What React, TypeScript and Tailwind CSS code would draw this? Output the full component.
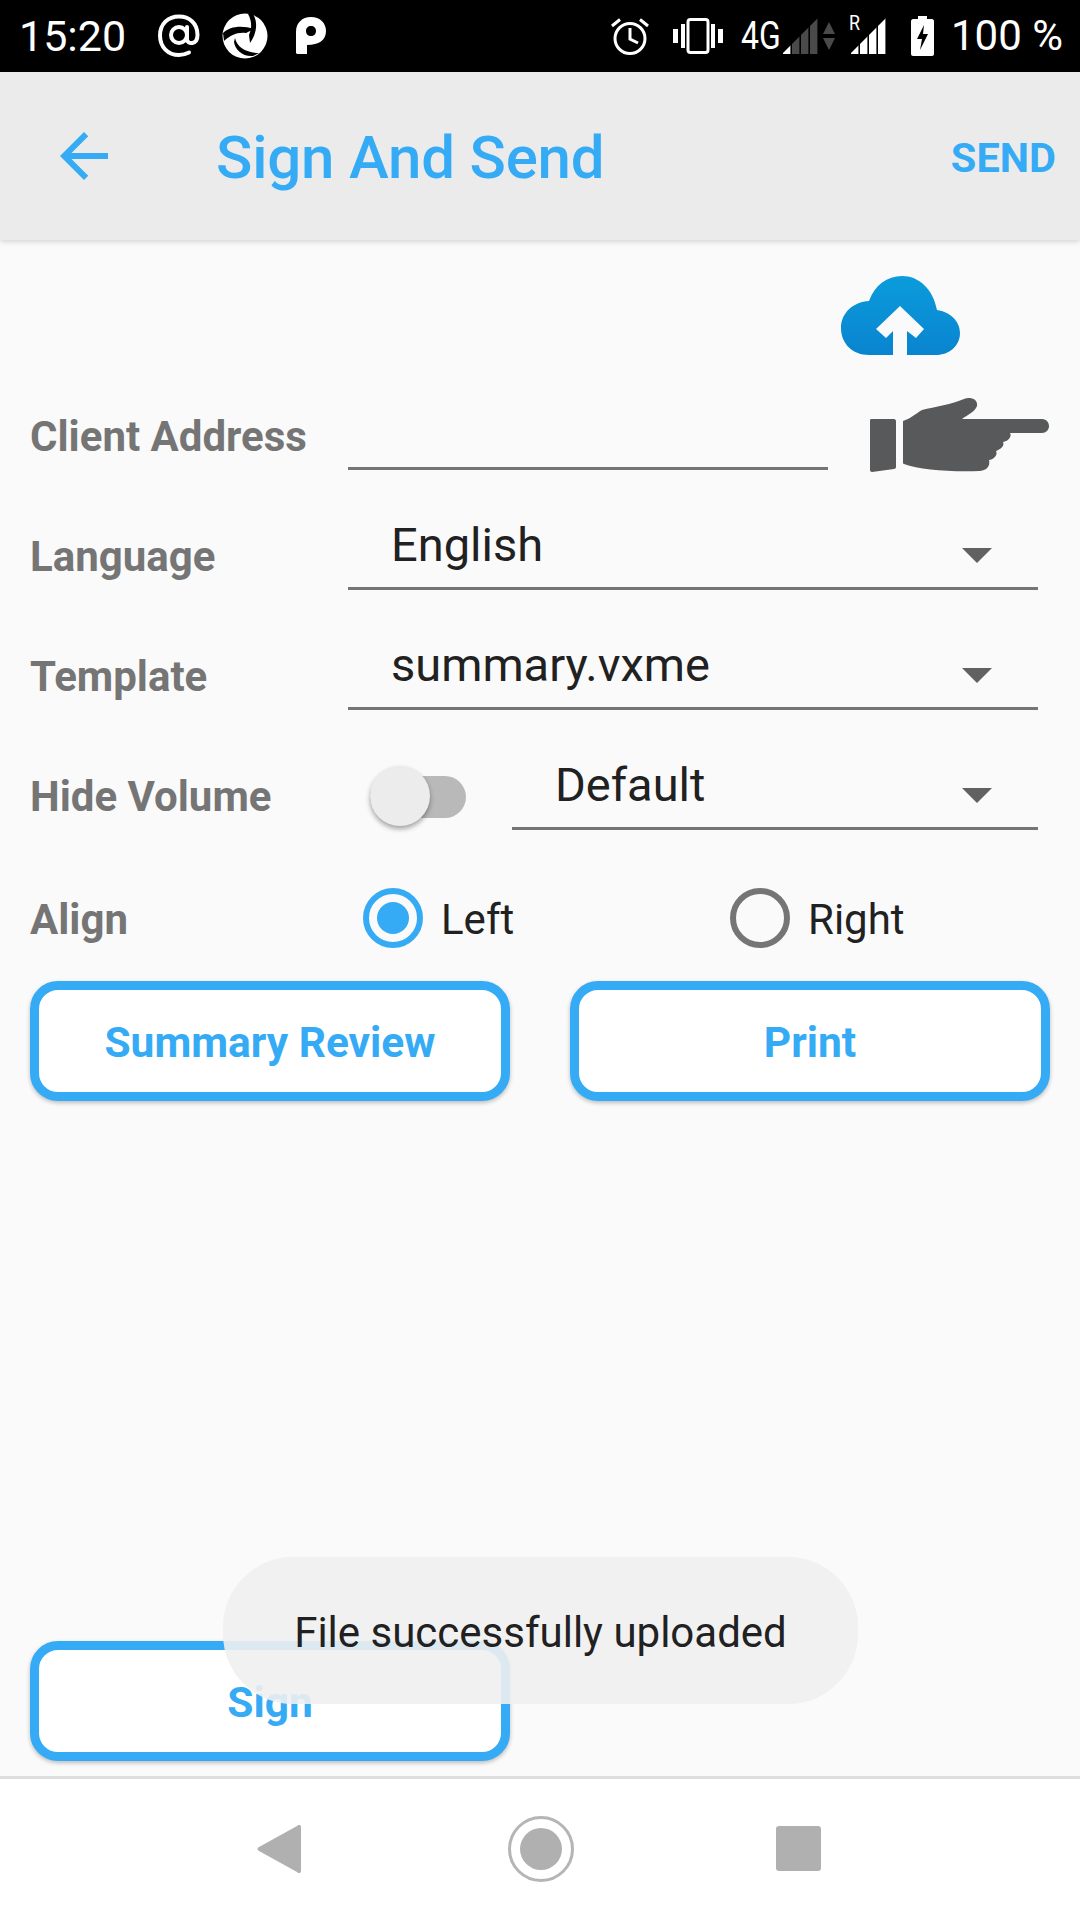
import React from "react";

const Triangle = () => (
  <svg width="30" height="15" viewBox="0 0 30 15" className="mt-[5px]"><path d="M0 0H30L15 15Z" fill="#616161" /></svg>
);

const Select = ({ value, className, pad }: { value: string; className: string; pad: string }) => (
  <div className={`h-[72px] flex items-center justify-between border-b-[3px] border-[#757575] ${className} ${pad}`}>
    <span className="text-[47px] leading-none text-[#212121] mb-[16px]">{value}</span>
    <Triangle />
  </div>
);

const Label = ({ children }: { children: React.ReactNode }) => (
  <div className="ml-[30px] w-[318px] h-[54px] shrink-0 text-[42px] font-bold leading-none text-[#757575]">{children}</div>
);

const OutlineButton = ({ children }: { children: React.ReactNode }) => (
  <button className="w-[480px] h-[120px] pt-[4px] rounded-[28px] border-[9px] border-[#36abf5] bg-white text-[42.500px] font-bold leading-none text-[#36abf5] shadow-[0_2px_4px_rgba(0,0,0,0.25)]">
    {children}
  </button>
);

const Signal = ({ id, color, fill }: { id: string; color: string; fill: number }) => {
  const bars = [0, 1, 2, 3];
  return (
    <svg width="36" height="36" viewBox="0 0 36 36">
      <defs>
        <clipPath id={id}><path d="M0 36L36 0V36Z" /></clipPath>
      </defs>
      <g clipPath={`url(#${id})`}>
        {bars.map((b) => (
          <rect key={b} x={b * 9 + 1} y="0" width="7.4" height="36" fill={b < fill ? color : "#4a4a4a"} />
        ))}
      </g>
    </svg>
  );
};

const StatusBar = () => (
  <div className="h-[72px] bg-black flex items-center text-white shrink-0">
    <span className="ml-[19px] w-[104px] text-[43px] leading-none whitespace-nowrap">15:20</span>
    <svg className="ml-[35px]" width="42" height="44" viewBox="0 0 42 44" fill="none" stroke="white" strokeWidth="4">
      <circle cx="21" cy="21" r="8" />
      <path d="M29 13V25C29 31 39.5 31 39.5 21C39.5 9 31 2.5 21 2.5C10 2.5 2 10 2 21.500C2 33 10 41 21 41C25 41 28 40 31 38.500" strokeLinecap="round" />
    </svg>
    <svg className="ml-[22px]" width="46" height="46" viewBox="0 0 46 46">
      <circle cx="23" cy="23" r="22.500" fill="white" />
      <path d="M1 20C8 13 20 12 32 16L24 20C15 19 9 22 2 28Z" fill="black" />
      <path d="M31 1C36 9 35 20 28 30L27 22C30 15 30 8 26 1Z" fill="black" />
      <path d="M13 25C15 34 24 40 37 40L31 43C21 44 13 37 12 29Z" fill="black" />
    </svg>
    <svg className="ml-[28px]" width="30" height="38" viewBox="0 0 30 38">
      <path fillRule="evenodd" d="M0 15C0 6 6 0 15 0C24 0 30 6 30 14C30 23 23 28 11 28V37H2C0.500 37 0 36.500 0 35ZM15 9C12 9 10 11 10 14C10 17 12 19 15 19C18 19 20 17 20 14C20 11 18 9 15 9Z" fill="white" />
    </svg>
    <div className="flex-1" />
    <svg width="38" height="38" viewBox="0 0 38 38" fill="none" stroke="white" strokeWidth="3">
      <circle cx="19" cy="21.500" r="15" />
      <path d="M19 11V22L27 26M1 9L9 2.500M37 9L29 2.500" />
    </svg>
    <svg className="ml-[24px]" width="50" height="36" viewBox="0 0 50 36">
      <rect x="15" y="1.500" width="20" height="33" rx="2.500" fill="none" stroke="white" strokeWidth="3" />
      <path d="M0 11H5V25H0ZM8 6H12V30H8ZM38 6H42V30H38ZM45 11H50V25H45Z" fill="white" />
    </svg>
    <span className="ml-[18px] w-[40px] text-[38px] leading-none scale-x-[0.84] origin-left whitespace-nowrap">4G</span>
    <div className="ml-[1px]"><Signal id="sig-dim" color="#ffffff" fill={1} /></div>
    <svg className="ml-[5px] mb-[1px]" width="12" height="28" viewBox="0 0 12 28"><path d="M6 0L12 12H0ZM6 28L12 16H0Z" fill="#4a4a4a" /></svg>
    <div className="ml-[15px] relative">
      <Signal id="sig-full" color="#ffffff" fill={4} />
      <span className="absolute left-[-2px] top-[-5px] text-[21px] leading-none scale-x-[0.85]">R</span>
    </div>
    <svg className="ml-[25px]" width="23" height="40" viewBox="0 0 23 40">
      <path fillRule="evenodd" d="M7 0H16V3H21C22 3 23 4 23 5V38C23 39 22 40 21 40H2C1 40 0 39 0 38V5C0 4 1 3 2 3H7ZM13 9L6 23H11L9 34L17 18H12Z" fill="white" />
    </svg>
    <span className="ml-[17px] mr-[17px] text-[42px] leading-none whitespace-nowrap">100 %</span>
  </div>
);

const AppBar = () => (
  <div className="h-[168px] bg-[#ebebeb] flex items-center shrink-0 shadow-[0_2px_5px_rgba(0,0,0,0.14)] z-10">
    <svg className="ml-[48px]" width="72" height="72" viewBox="0 0 24 24" fill="#36abf5">
      <path d="M20 11H7.830l5.590-5.590L12 4l-8 8 8 8 1.410-1.410L7.830 13H20v-2z" />
    </svg>
    <span className="ml-[96px] text-[60px] tracking-[-0.2px] font-medium leading-none text-[#36abf5] mt-[4px]">Sign And Send</span>
    <div className="flex-1" />
    <span className="mr-[24px] text-[41.500px] font-bold leading-none text-[#36abf5] mt-[3px]">SEND</span>
  </div>
);

const Row = ({ children }: { children: React.ReactNode }) => (
  <div className="h-[120px] flex items-end">{children}</div>
);

export default function App() {
  return (
    <div className="relative h-[1920px] w-[1080px] flex flex-col bg-[#fafafa] overflow-hidden font-['Roboto',sans-serif]">
      <StatusBar />
      <AppBar />
      <main className="flex-1 flex flex-col">
        <div className="h-[110px] flex justify-end pr-[120px] pt-[36px]">
          <svg width="119" height="80" viewBox="0 0 119 80">
            <defs>
              <linearGradient id="cloud" x1="0" y1="0" x2="0" y2="1">
                <stop offset="0" stopColor="#0a9cdb" />
                <stop offset="1" stopColor="#0a84d0" />
              </linearGradient>
            </defs>
            <path d="M28 79C12 79 0 68 0 52C0 37 12 26 28 25C34 9 46 0 61 0C78 0 92 13 96 34C109 36 119 45 119 57C119 70 108 79 95 79H28Z" fill="url(#cloud)" />
            <path d="M59 30L35 53L45 62L52 55V79H66V55L75 62L83 53Z" fill="#fafafa" />
          </svg>
        </div>
        <Row>
          <Label>Client Address</Label>
          <div className="w-[480px] border-b-[3px] border-[#757575] h-[72px]" />
          <svg className="ml-[42px] mb-[-2px]" width="180" height="74" viewBox="0 0 180 74" fill="#58595b">
            <path d="M0 22C0 21 1 21 2 21H24C25 21 26 22 26 23V69C26 70 25 71 24 71L2 74C1 74 0 73 0 72Z" />
            <path d="M33 23C40 21 45 16 52 12C65 9 82 6 94 1C102 -2 108 2 107 8C105 14 97 17 92 21H172C177 21 179 25 179 28C179 32 176 35 172 35H140C142 38 139 43 133 44C135 48 130 52 126 53C128 57 124 61 119 62C120 66 119 72 110 73C80 74 50 72 34 66C33 66 33 65 33 64Z" />
          </svg>
        </Row>
        <Row>
          <Label>Language</Label>
          <Select value="English" className="w-[690px]" pad="pl-[43px] pr-[46px]" />
        </Row>
        <Row>
          <Label>Template</Label>
          <Select value="summary.vxme" className="w-[690px]" pad="pl-[43px] pr-[46px]" />
        </Row>
        <Row>
          <Label>Hide Volume</Label>
          <div className="w-[164px] h-[72px] relative">
            <div className="absolute left-[22px] top-[18px] w-[96px] h-[42px] rounded-full bg-[#b9b9b9]" />
            <div className="absolute left-[22px] top-[8px] w-[60px] h-[60px] rounded-full bg-[#ececec] shadow-[0_3px_5px_rgba(0,0,0,0.35)]" />
          </div>
          <Select value="Default" className="w-[526px]" pad="pl-[43px] pr-[46px]" />
        </Row>
        <div className="h-[151px] flex items-start pt-[58px]">
          <div className="ml-[30px] w-[333px] shrink-0 mt-[11px] text-[42px] font-bold leading-none text-[#757575]">Align</div>
          <div className="flex items-center w-[367px]">
            <div className="w-[60px] h-[60px] rounded-full border-[6px] border-[#36abf5] flex items-center justify-center">
              <div className="w-[32px] h-[32px] rounded-full bg-[#36abf5]" />
            </div>
            <span className="ml-[18px] text-[42px] leading-none text-[#212121] mt-[3px]">Left</span>
          </div>
          <div className="flex items-center">
            <div className="w-[60px] h-[60px] rounded-full border-[6px] border-[#757575]" />
            <span className="ml-[18px] text-[42px] leading-none text-[#212121] mt-[3px]">Right</span>
          </div>
        </div>
        <div className="flex justify-between px-[30px]">
          <OutlineButton>Summary Review</OutlineButton>
          <OutlineButton>Print</OutlineButton>
        </div>
        <div className="flex-1" />
        <div className="px-[30px] mb-[15px]">
          <OutlineButton>Sign</OutlineButton>
        </div>
      </main>
      <nav className="h-[144px] bg-white border-t-[3px] border-[#dedede] flex items-center shrink-0">
        <svg className="ml-[257px] mb-[2px]" width="44" height="48" viewBox="0 0 44 48"><path d="M44 2V46C44 48 42 49 40 47L2 26C0 25 0 23 2 22L40 1C42 -1 44 0 44 2Z" fill="#b0b0b0" /></svg>
        <div className="ml-[207px] mb-[2px] w-[66px] h-[66px] rounded-full border-[3px] border-[#b5b5b5] flex items-center justify-center">
          <div className="w-[42px] h-[42px] rounded-full bg-[#b0b0b0]" />
        </div>
        <div className="ml-[202px] mb-[2px] w-[45px] h-[45px] rounded-[3px] bg-[#b0b0b0]" />
      </nav>
      <div className="absolute left-[223px] top-[1557px] w-[635px] h-[147px] rounded-[70px] bg-[#efefef]/90 flex items-center justify-center">
        <span className="text-[42px] leading-none text-[#212121] mt-[4px]">File successfully uploaded</span>
      </div>
    </div>
  );
}
